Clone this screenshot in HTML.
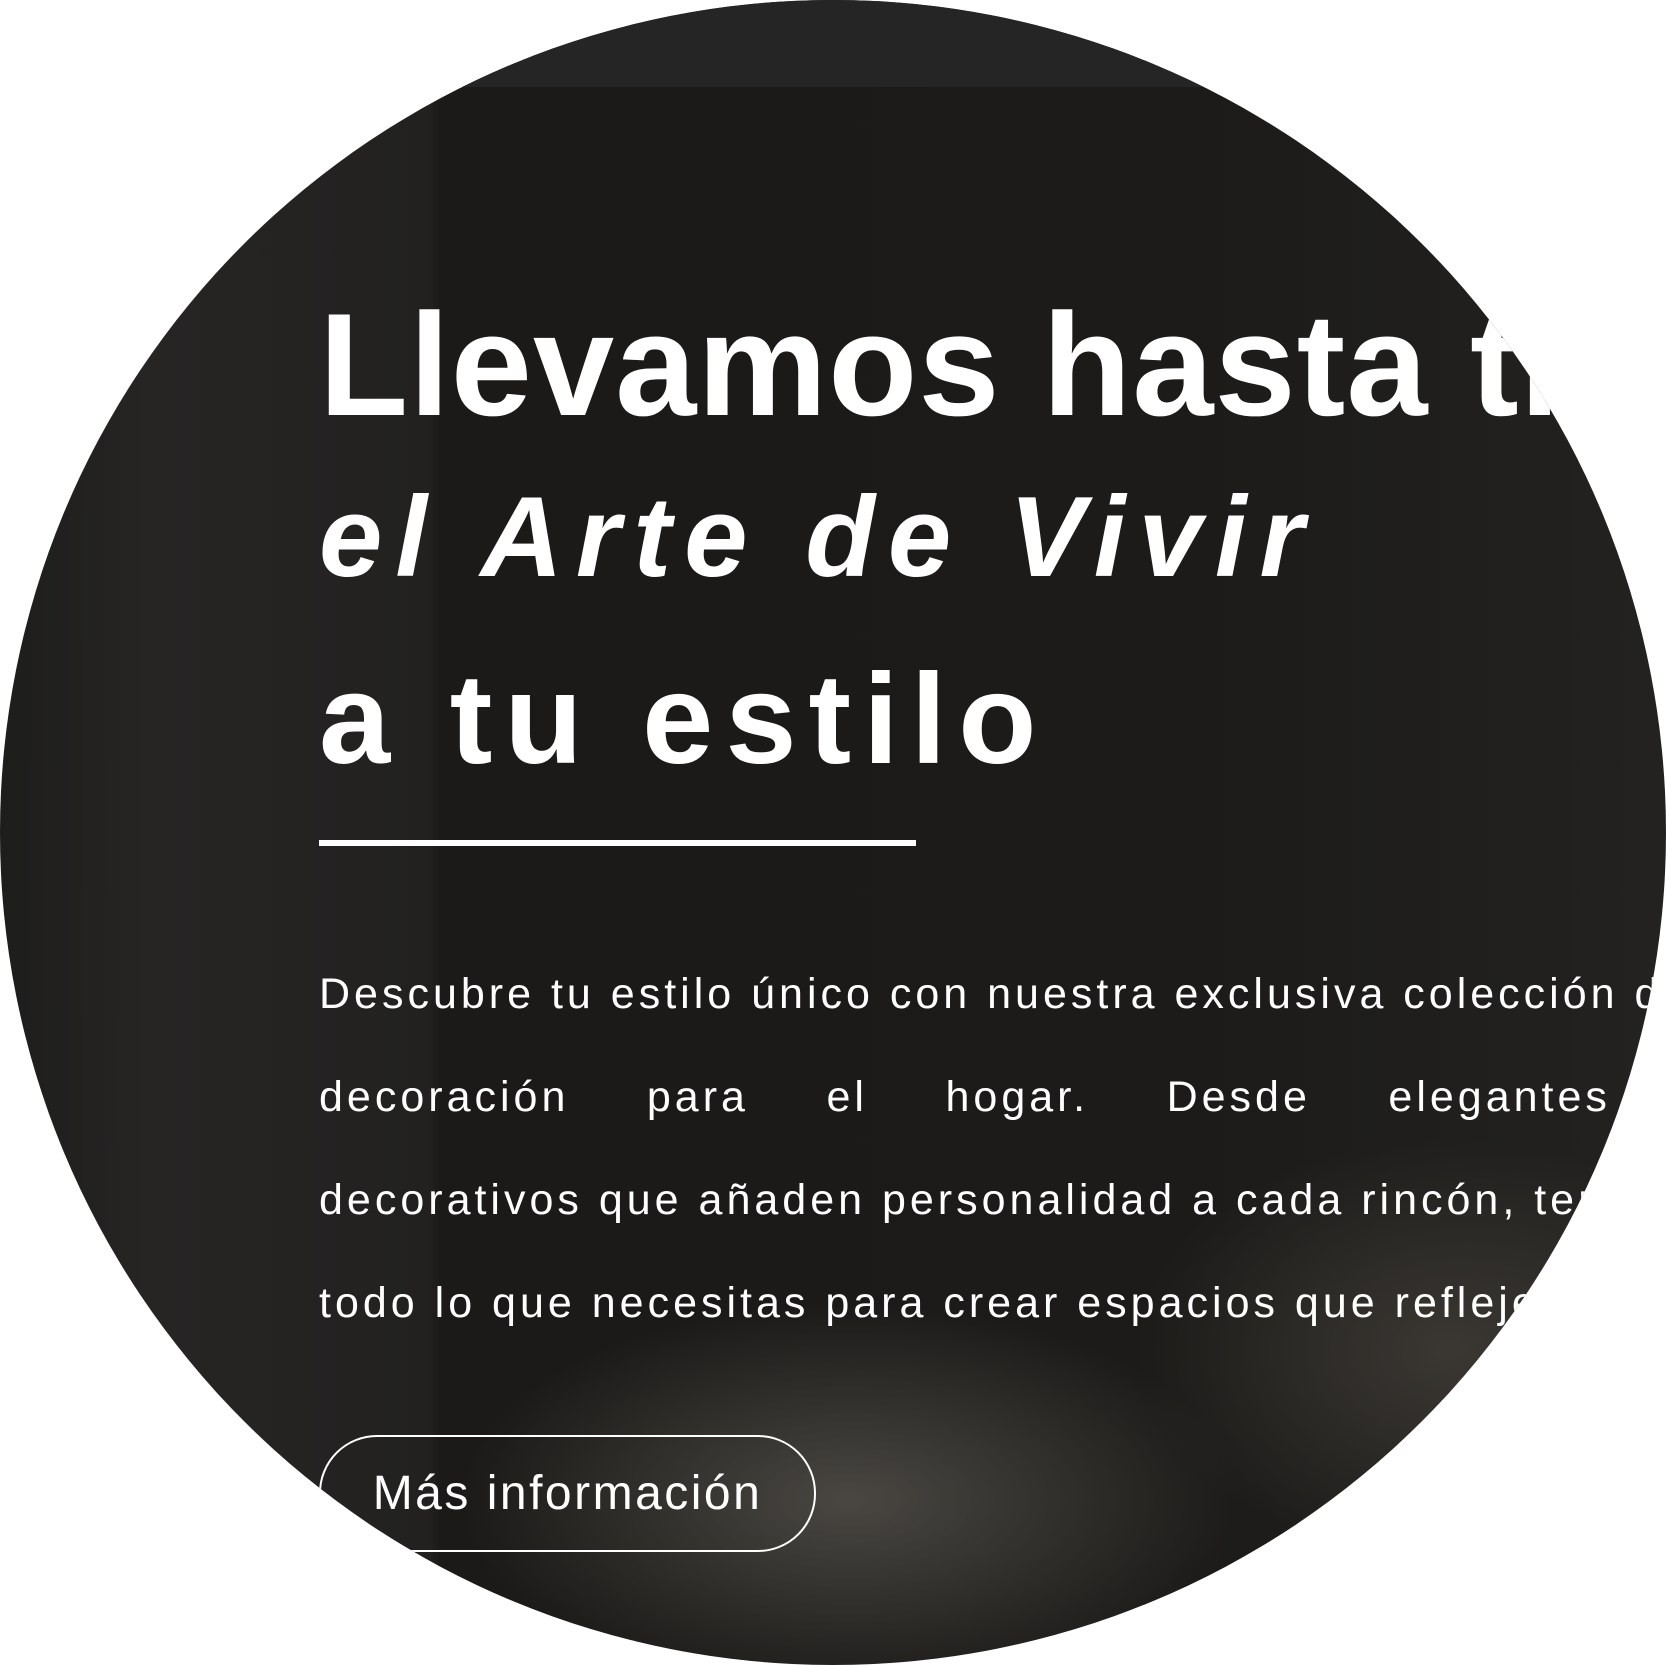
<!DOCTYPE html>
<html><head><meta charset="utf-8"><style>
html,body{margin:0;padding:0;background:#fff;width:1666px;height:1665px;overflow:hidden}
.c{position:absolute;left:0;top:0;width:1666px;height:1665px;border-radius:50%;overflow:hidden;
background:
radial-gradient(ellipse 520px 260px at 850px 1500px,rgba(85,82,76,.8),rgba(60,57,52,0) 75%),
radial-gradient(ellipse 450px 300px at 1450px 1350px,rgba(70,66,60,.7),rgba(60,57,52,0) 70%),
linear-gradient(90deg,#1d1d1c 0,#262524 150px,#222120 430px,#1b1a18 440px,#1c1b19 1200px,#232220 1666px);}
.top{position:absolute;left:0;top:0;width:1666px;height:87px;background:#252526}
.t{position:absolute;left:319px;color:#fff;font-family:"Liberation Sans",sans-serif;font-weight:bold;white-space:nowrap;line-height:1}
.p{position:absolute;left:319px;color:#fff;font-family:"Liberation Sans",sans-serif;font-size:43px;letter-spacing:4px;line-height:103px;white-space:nowrap}
</style></head><body>
<div class="c">
<div class="top"></div>
<div class="t" style="top:292px;font-size:146px;letter-spacing:1px">Llevamos hasta ti</div>
<div class="t" style="top:481px;font-size:114px;font-style:italic;letter-spacing:13px">el Arte de Vivir</div>
<div class="t" style="top:656px;font-size:128px;letter-spacing:12px">a tu estilo</div>
<div style="position:absolute;left:319px;top:840px;width:597px;height:6px;background:#fff"></div>
<div class="p" style="top:943px">Descubre tu estilo único con nuestra exclusiva colección de</div>
<div class="p" style="top:1046px;width:1560px;text-align:justify;text-align-last:justify">decoración para el hogar. Desde elegantes muebles</div>
<div class="p" style="top:1149px">decorativos que añaden personalidad a cada rincón, tenemos</div>
<div class="p" style="top:1252px">todo lo que necesitas para crear espacios que reflejen</div>
<div style="position:absolute;left:319px;top:1435px;width:497px;height:117px;border:2px solid #fff;border-radius:58px;box-sizing:border-box;color:#fff;font-family:'Liberation Sans',sans-serif;font-size:48px;letter-spacing:2.5px;line-height:113px;text-align:center">Más información</div>
</div>
</body></html>
